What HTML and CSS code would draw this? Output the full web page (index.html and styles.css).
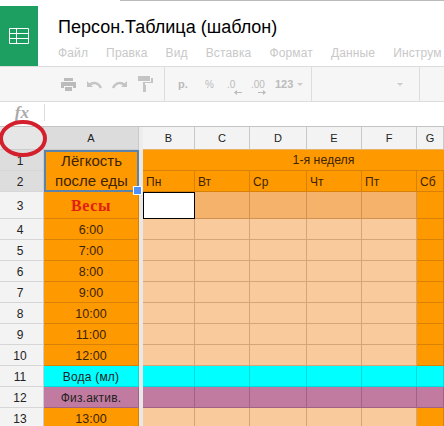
FILE: index.html
```html
<!DOCTYPE html>
<html lang="ru">
<head>
<meta charset="utf-8">
<title>Персон.Таблица (шаблон)</title>
<link rel="stylesheet" href="styles.css">
</head>
<body>
<div class="topline"></div>
<header class="head">
  <div class="logo">
    <svg width="20" height="16" viewBox="0 0 20 16" fill="none" stroke="#fff" stroke-width="1"><path d="M.5.5h19v15H.5zM.5 5.5h19M.5 10.5h19M7.5.5v15"/></svg>
  </div>
  <div class="titles">
    <div class="title">Персон.Таблица (шаблон)</div>
    <nav class="menu"><span>Файл</span><span>Правка</span><span>Вид</span><span>Вставка</span><span>Формат</span><span>Данные</span><span>Инструм</span></nav>
  </div>
</header>
<div class="toolbar">
  <div class="group g1">
    <svg width="15" height="13" viewBox="0 0 15 13" fill="#bbb"><path d="M3 0h9v3H3zM0 4h15v6h-3V8H3v2H0zM4 9h7v4H4z"/></svg>
    <svg width="16" height="9" viewBox="0 0 16 9" fill="none" stroke="#c4c4c4" stroke-width="2.4"><path d="M15 8C12 2 7 2 3 5"/><path d="M1 1v6h6" fill="#c4c4c4" stroke="none"/></svg>
    <svg width="16" height="9" viewBox="0 0 16 9" fill="none" stroke="#c4c4c4" stroke-width="2.4"><path d="M1 8c3-6 8-6 12-3"/><path d="M15 1v6H9" fill="#c4c4c4" stroke="none"/></svg>
    <svg width="15" height="16" viewBox="0 0 15 16" fill="#c4c4c4"><path d="M0 0h12v5H0zM13 2h2v5H7v2H5V6h8zM5 9h3v7H5z"/></svg>
  </div>
  <div class="group g2">
    <span class="t-r">р.</span><span class="t-p">%</span>
    <span class="t-d">.0<svg width="8" height="5" viewBox="0 0 8 5" fill="#bbb"><path d="M0 2.5 3 0v2h5v1H3v2z"/></svg></span>
    <span class="t-d">.00<svg width="8" height="5" viewBox="0 0 8 5" fill="#bbb"><path d="M8 2.5 5 0v2H0v1h5v2z"/></svg></span>
    <span class="t-n">123</span><i class="caret"></i>
  </div>
  <div class="group g3"><i class="caret"></i></div>
  <div class="group g4"></div>
</div>
<div class="formula"><span class="fx">fx</span><div class="fx-input"></div></div>
<main class="sheet">
  <div class="ch corner"></div><div class="ch sel">A</div><div class="freeze-h"></div><div class="ch">B</div><div class="ch">C</div><div class="ch">D</div><div class="ch">E</div><div class="ch">F</div><div class="ch">G</div>

  <div class="rh sel">1</div><div class="c or a-merged">Лёгкость<br>после еды<i class="handle"></i></div><div class="freeze f2"></div><div class="c or week">1-я неделя</div>
  <div class="rh sel">2</div><div class="c or day">Пн</div><div class="c or day">Вт</div><div class="c or day">Ср</div><div class="c or day">Чт</div><div class="c or day">Пт</div><div class="c or day">Сб</div>

  <div class="rh">3</div><div class="c or vesy">Весы</div><div class="freeze"></div><div class="c active"></div><div class="c pd"></div><div class="c pd"></div><div class="c pd"></div><div class="c pd"></div><div class="c or"></div>

  <div class="rh">4</div><div class="c or tm">6:00</div><div class="freeze"></div><div class="c pl"></div><div class="c pl"></div><div class="c pl"></div><div class="c pl"></div><div class="c pl"></div><div class="c or"></div>
  <div class="rh">5</div><div class="c or tm">7:00</div><div class="freeze"></div><div class="c pl"></div><div class="c pl"></div><div class="c pl"></div><div class="c pl"></div><div class="c pl"></div><div class="c or"></div>
  <div class="rh">6</div><div class="c or tm">8:00</div><div class="freeze"></div><div class="c pl"></div><div class="c pl"></div><div class="c pl"></div><div class="c pl"></div><div class="c pl"></div><div class="c or"></div>
  <div class="rh">7</div><div class="c or tm">9:00</div><div class="freeze"></div><div class="c pl"></div><div class="c pl"></div><div class="c pl"></div><div class="c pl"></div><div class="c pl"></div><div class="c or"></div>
  <div class="rh">8</div><div class="c or tm">10:00</div><div class="freeze"></div><div class="c pl"></div><div class="c pl"></div><div class="c pl"></div><div class="c pl"></div><div class="c pl"></div><div class="c or"></div>
  <div class="rh">9</div><div class="c or tm">11:00</div><div class="freeze"></div><div class="c pl"></div><div class="c pl"></div><div class="c pl"></div><div class="c pl"></div><div class="c pl"></div><div class="c or"></div>
  <div class="rh">10</div><div class="c or tm">12:00</div><div class="freeze"></div><div class="c pl"></div><div class="c pl"></div><div class="c pl"></div><div class="c pl"></div><div class="c pl"></div><div class="c or"></div>

  <div class="rh">11</div><div class="c cy lbl">Вода (мл)</div><div class="freeze"></div><div class="c cy"></div><div class="c cy"></div><div class="c cy"></div><div class="c cy"></div><div class="c cy"></div><div class="c cy"></div>
  <div class="rh">12</div><div class="c mv lbl">Физ.актив.</div><div class="freeze"></div><div class="c mv"></div><div class="c mv"></div><div class="c mv"></div><div class="c mv"></div><div class="c mv"></div><div class="c mv"></div>
  <div class="rh">13</div><div class="c or tm">13:00</div><div class="freeze"></div><div class="c pl"></div><div class="c pl"></div><div class="c pl"></div><div class="c pl"></div><div class="c pl"></div><div class="c or"></div>
</main>
<svg class="ring" width="50" height="40" viewBox="0 0 50 40" fill="none"><ellipse cx="23" cy="18.5" rx="22" ry="16.5" stroke="#d4202c" stroke-width="4"/></svg>
</body>
</html>
```
FILE: styles.css
```css
* { box-sizing: border-box; }
html, body { margin: 0; height: 426px; overflow: hidden; background: #fff; }
body { position: relative; font-family: "Liberation Sans", Arial, sans-serif; color: #222; }
.topline { height: 6px; margin-left: 120px; border-top: 1px solid #bbb; }
.head { display: flex; height: 60px; }
.logo { flex: none; width: 38px; background: #1d9f61; display: flex; align-items: center; justify-content: center; }
.titles { padding: 11px 0 0 20px; white-space: nowrap; }
.title { font-size: 18px; line-height: 20px; color: #000; }
.menu { display: flex; gap: 18px; margin-top: 8px; font-size: 12px; line-height: 16px; color: #c8c8c8; letter-spacing: .15px; }
.toolbar { display: flex; height: 36px; background: #f6f6f6; border-top: 1px solid #ddd; border-bottom: 1px solid #ddd; }
.group { display: flex; align-items: center; border-right: 1px solid #ddd; flex: none; }
.g1 { width: 165px; padding-left: 61px; gap: 10px; }
.g2 { width: 147px; padding-left: 13px; font-size: 11px; font-weight: bold; color: #bbb; }
.g3 { width: 108px; justify-content: flex-end; padding-right: 16px; }
.g4 { flex: 1; border-right: 0; }
.t-r { width: 27px; }
.t-p { width: 22px; font-weight: normal; font-size: 10px; }
.t-d { width: 24px; position: relative; font-weight: normal; font-size: 10px; }
.t-d svg { position: absolute; left: 7px; top: 11px; }
.t-n { font-size: 11px; }
.caret { width: 0; height: 0; margin-left: 4px; border: 3px solid transparent; border-top-color: #ccc; border-bottom: 0; }
.formula { display: flex; height: 24px; }
.fx { width: 44px; padding: 1px 15px 0 0; text-align: right; font-family: "Liberation Serif", serif; font-style: italic; font-weight: bold; font-size: 17px; line-height: 20px; color: #aaa; }
.fx-input { flex: 1; margin: 2px 0 0; border-left: 1px solid #ddd; height: 17px; }
.sheet { display: grid; grid-template-columns: 44px 95px 4px 52px 55px 57px 55px 55px 27px; grid-template-rows: 23px 21px 21px 27px repeat(10, 21px); background: #f3f3f3; border-top: 1px solid #c4c4c4; height: 300px; overflow: hidden; }
.ch { background: #f3f3f3; border-right: 1px solid #c9c9c9; border-bottom: 1px solid #e6b366; font-size: 11px; display: flex; align-items: center; justify-content: center; color: #222; }
.ch.corner { background: #e6e6e6; border-bottom-color: #ccc; }
.ch.sel { background: #dcdcdc; border-bottom-color: #ccc; }
.freeze-h { background: #ededed; }
.rh { background: #f3f3f3; border-right: 1px solid #ccc; border-bottom: 1px solid #d6d6d6; font-size: 12px; display: flex; align-items: center; justify-content: center; padding: 1px 3px 0 0; color: #222; }
.rh.sel { background: #dddddd; }
.freeze { background: #e8e8e8; }
.f2 { grid-row: span 2; }
.c { border-right: 1px solid rgba(120, 70, 20, .28); border-bottom: 1px solid rgba(120, 70, 20, .28); font-size: 13px; color: #3c2400; display: flex; align-items: center; justify-content: center; white-space: nowrap; }
.or { background: #ff9900; }
.pd { background: #f4b26b; }
.pl { background: #f9cb9c; }
.cy { background: #00ffff; border-color: rgba(0, 110, 120, .25); }
.mv { background: #c27ba0; border-color: rgba(90, 40, 70, .3); }
.a-merged { grid-row: span 2; position: relative; text-align: center; font-size: 15px; line-height: 20px; border: 2px solid #5e83a8; }
.handle { position: absolute; right: -5px; bottom: -5px; width: 7px; height: 7px; background: #4d90fe; border: 1px solid #fff; box-sizing: content-box; }
.week { grid-column: span 6; font-size: 12.3px; padding-left: 60px; border-right: 0; }
.day { justify-content: flex-start; padding: 1px 0 0 3px; font-size: 12px; }
.vesy { padding-top: 2px; font-family: "Liberation Serif", serif; font-weight: bold; font-size: 16px; color: #e02010; letter-spacing: .6px; }
.tm { padding-top: 2px; font-size: 12.5px; }
.lbl { padding-top: 1px; font-size: 12px; letter-spacing: .2px; color: #222; }
.active { background: #fff; border: 1px solid #000; }
.ring { position: absolute; left: 0; top: 120px; }
```
